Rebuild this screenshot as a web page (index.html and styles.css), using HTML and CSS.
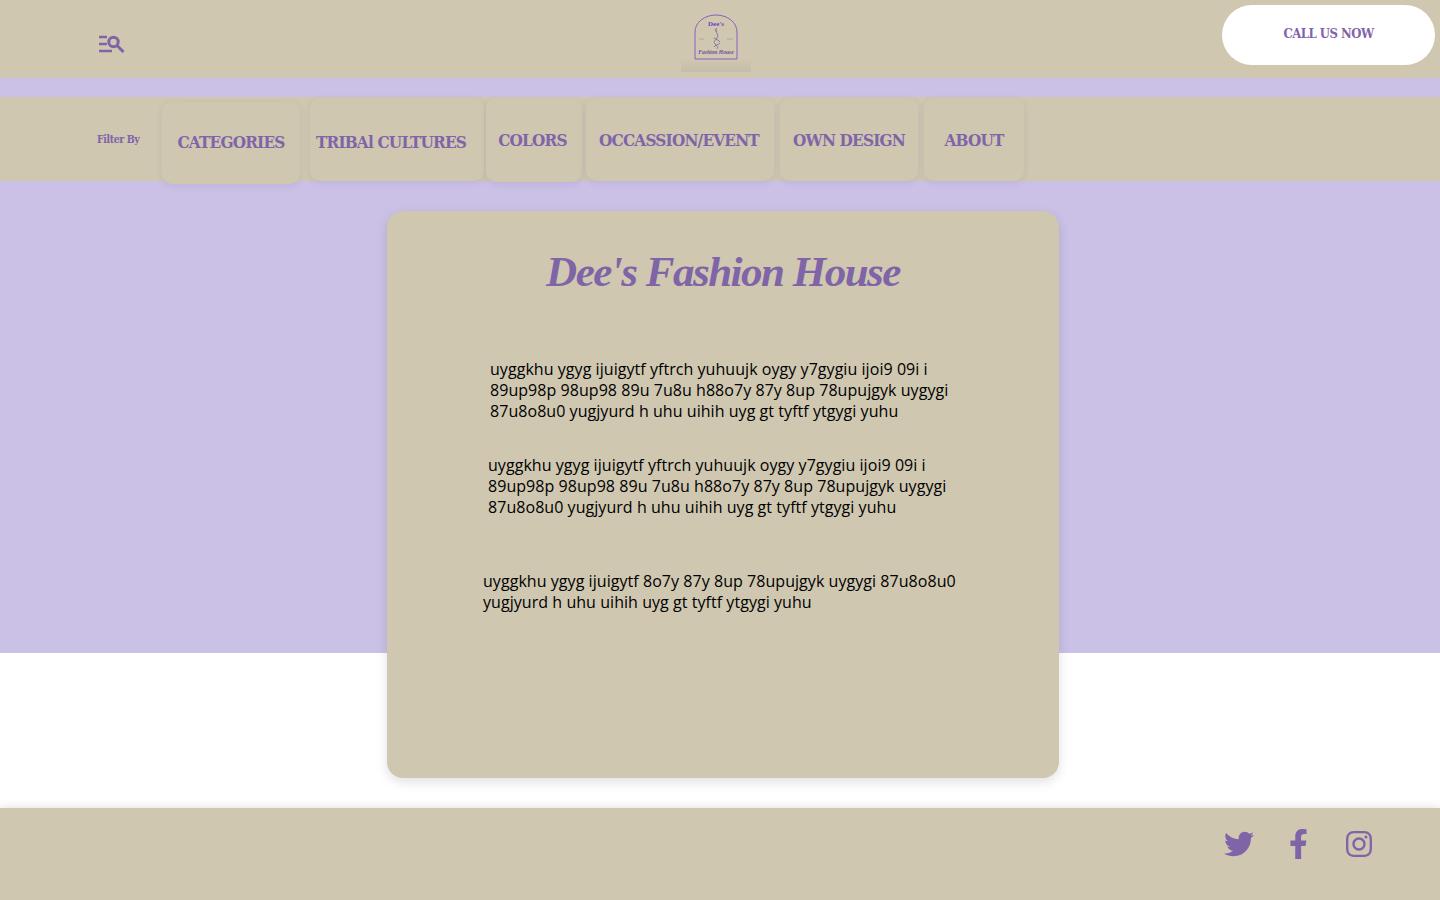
FILE: index.html
```html
<!DOCTYPE html>
<html lang="en">
<head>
    <meta charset="UTF-8">
    <meta name="viewport" content="width=device-width, initial-scale=1.0">
    <title>Dee's Fashion House</title>
    <link rel="stylesheet" href="styles.css">
</head>
<body>

    <header class="top-bar">
        <a class="menu-icon" href="#" aria-label="Search menu">
            <svg width="26" height="18" viewBox="0 0 26 18" fill="none" stroke="#8064a8" stroke-width="2.6">
                <path d="M0 2h8M0 9h8M0 16h13"/>
                <circle cx="14.5" cy="7" r="4.7" stroke-width="3"/>
                <path d="M18 10.5l6.5 6.5" stroke-width="3"/>
            </svg>
        </a>
        <div class="logo">
            <svg width="70" height="60" viewBox="0 0 70 60">
                <path d="M14 47V20C14 10 24 3 35 3s21 7 21 17v27z" fill="none" stroke="#8a5fc4" stroke-width="1"/>
                <text x="35" y="14" text-anchor="middle" class="logo-top">Dee's</text>
                <path d="M36 16c-4 3 3 6 0 10s-4 4-1 7 1 3 1 4M34 17l2 3M33 26c3 2 5 2 6 4M39 31c-2 2-5 2-6 4" fill="none" stroke="#8a75a8" stroke-width="1"/>
                <path d="M18 27h5M46 27h6" stroke="#a99bb0" stroke-width="0.8"/>
                <text x="35" y="42" text-anchor="middle" class="logo-bottom">Fashion House</text>
            </svg>
        </div>
        <a class="call-btn" href="#">CALL US NOW</a>
    </header>

    <section class="hero">
        <nav class="filter-bar">
            <span class="filter-label">Filter By</span>
            <a class="filter-item item-categories" href="#">CATEGORIES</a>
            <a class="filter-item item-tribal" href="#">TRIBAl CULTURES</a>
            <a class="filter-item item-colors" href="#">COLORS</a>
            <a class="filter-item item-occasion" href="#">OCCASSION/EVENT</a>
            <a class="filter-item item-design" href="#">OWN DESIGN</a>
            <a class="filter-item item-about" href="#">ABOUT</a>
        </nav>

        <main class="card">
            <h1>Dee's Fashion House</h1>
            <p class="para-one">uyggkhu ygyg ijuigytf yftrch yuhuujk oygy y7gygiu ijoi9 09i i<br>89up98p 98up98 89u 7u8u h88o7y 87y 8up 78upujgyk uygygi<br>87u8o8u0 yugjyurd h uhu uihih uyg gt tyftf ytgygi yuhu</p>
            <p class="para-two">uyggkhu ygyg ijuigytf yftrch yuhuujk oygy y7gygiu ijoi9 09i i<br>89up98p 98up98 89u 7u8u h88o7y 87y 8up 78upujgyk uygygi<br>87u8o8u0 yugjyurd h uhu uihih uyg gt tyftf ytgygi yuhu</p>
            <p class="para-three">uyggkhu ygyg ijuigytf 8o7y 87y 8up 78upujgyk uygygi 87u8o8u0<br>yugjyurd h uhu uihih uyg gt tyftf ytgygi yuhu</p>
        </main>
    </section>

    <footer class="footer">
        <a class="social-link" href="#" aria-label="Twitter">
            <svg width="30" height="30" viewBox="0 0 512 512"><path d="M459.37 151.716c.325 4.548.325 9.097.325 13.645 0 138.72-105.583 298.558-298.558 298.558-59.452 0-114.68-17.219-161.137-47.106 8.447.974 16.568 1.299 25.34 1.299 49.055 0 94.213-16.568 130.274-44.832-46.132-.975-84.792-31.188-98.112-72.772 6.498.974 12.995 1.624 19.818 1.624 9.421 0 18.843-1.3 27.614-3.573-48.081-9.747-84.143-51.98-84.143-102.985v-1.299c13.969 7.797 30.214 12.67 47.431 13.319-28.264-18.843-46.781-51.005-46.781-87.391 0-19.492 5.197-37.36 14.294-52.954 51.655 63.675 129.3 105.258 216.365 109.807-1.624-7.797-2.599-15.918-2.599-24.04 0-57.828 46.782-104.934 104.934-104.934 30.213 0 57.502 12.67 76.67 33.137 23.715-4.548 46.456-13.32 66.599-25.34-7.798 24.366-24.366 44.833-46.132 57.827 21.117-2.273 41.584-8.122 60.426-16.243-14.292 20.791-32.161 39.308-52.628 54.253z"/></svg>
        </a>
        <a class="social-link" href="#" aria-label="Facebook">
            <svg width="19" height="30" viewBox="0 0 320 512"><path d="M279.14 288l14.22-92.66h-88.91v-60.13c0-25.35 12.42-50.06 52.24-50.06h40.42V6.26S260.43 0 225.36 0c-73.22 0-121.08 44.38-121.08 124.72v70.62H22.89V288h81.39v224h100.17V288z"/></svg>
        </a>
        <a class="social-link" href="#" aria-label="Instagram">
            <svg width="26" height="30" viewBox="0 0 448 512"><path d="M224.1 141c-63.6 0-114.9 51.3-114.9 114.9s51.3 114.9 114.9 114.9S339 319.5 339 255.9 287.7 141 224.1 141zm0 189.6c-41.1 0-74.7-33.5-74.7-74.7s33.5-74.7 74.7-74.7 74.7 33.5 74.7 74.7-33.6 74.7-74.7 74.7zm146.4-194.3c0 14.9-12 26.8-26.8 26.8-14.9 0-26.8-12-26.8-26.8s12-26.8 26.8-26.8 26.8 12 26.8 26.8zm76.1 27.2c-1.7-35.9-9.9-67.7-36.2-93.9-26.2-26.2-58-34.4-93.9-36.2-37-2.1-147.9-2.1-184.9 0-35.8 1.7-67.6 9.9-93.9 36.1s-34.4 58-36.2 93.9c-2.1 37-2.1 147.9 0 184.9 1.7 35.9 9.9 67.7 36.2 93.9s58 34.4 93.9 36.2c37 2.1 147.9 2.1 184.9 0 35.9-1.7 67.7-9.9 93.9-36.2 26.2-26.2 34.4-58 36.2-93.9 2.1-37 2.1-147.8 0-184.8zM398.8 388c-7.8 19.6-22.9 34.7-42.6 42.6-29.5 11.7-99.5 9-132.1 9s-102.7 2.6-132.1-9c-19.6-7.8-34.7-22.9-42.6-42.6-11.7-29.5-9-99.5-9-132.1s-2.6-102.7 9-132.1c7.8-19.6 22.9-34.7 42.6-42.6 29.5-11.7 99.5-9 132.1-9s102.7-2.6 132.1 9c19.6 7.8 34.7 22.9 42.6 42.6 11.7 29.5 9 99.5 9 132.1s2.7 102.7-9 132.1z"/></svg>
        </a>
    </footer>

</body>
</html>
```

FILE: styles.css
```css
body {
    margin: 0;
    background-color: white;
    font-family: "Open Sans", sans-serif;
    height: 900px;
    overflow: hidden;
}
a {
    text-decoration: none;
    color: #8064a8;
}
.top-bar {
    display: flex;
    height: 78px;
    background-color: #cfc7b0;
}
.menu-icon {
    margin: 35px 0 0 99px;
    height: 18px;
}
.logo {
    width: 70px;
    height: 60px;
    margin: 12px 0 0 556px;
    background: linear-gradient(#cfc7b0 78%, #c4bda8);
}
.logo-top {
    font: bold 7px "Liberation Serif", serif;
    fill: #6f3fc0;
}
.logo-bottom {
    font: italic bold 5.6px "Liberation Serif", serif;
    fill: #6f4fa0;
}
.call-btn {
    width: 213px;
    height: 60px;
    margin: 5px 0 0 471px;
    background-color: white;
    border-radius: 30px;
    text-align: center;
    font: bold 13px/57px "DejaVu Serif Condensed", "DejaVu Serif", serif;
    letter-spacing: -0.5px;
}
.hero {
    height: 556px;
    padding-top: 19px;
    background-color: #cbc0e6;
}
.filter-bar {
    display: flex;
    align-items: flex-start;
    height: 84px;
    background-color: #cfc7b0;
    font: bold 17px "DejaVu Serif Condensed", "DejaVu Serif", serif;
    letter-spacing: -0.8px;
}
.filter-label {
    width: 65px;
    margin: 36px 0 0 97px;
    font-size: 10.5px;
    letter-spacing: -0.4px;
    color: #8064a8;
}
.filter-item {
    height: 83px;
    box-sizing: border-box;
    margin-top: 1px;
    padding-top: 32px;
    text-align: center;
    border-radius: 10px;
    background-color: #cfc7b0;
    box-shadow: 0 2px 6px rgba(100, 80, 140, 0.12);
}
.item-categories {
    width: 138px;
    height: 82px;
    margin-top: 5px;
    padding-top: 30px;
}
.item-tribal {
    width: 174px;
    margin-left: 10px;
    padding-top: 34px;
    padding-right: 12px;
    white-space: nowrap;
}
.item-colors {
    width: 96px;
    height: 84px;
    margin-left: 2px;
    padding-right: 3px;
    box-shadow: 0 3px 6px rgba(100, 80, 140, 0.12);
}
.item-occasion {
    width: 188px;
    margin-left: 4px;
    padding-right: 2px;
}
.item-design {
    width: 138px;
    margin-left: 6px;
}
.item-about {
    width: 100px;
    margin-left: 6px;
}
.card {
    width: 672px;
    height: 567px;
    box-sizing: border-box;
    margin: 30px 0 0 387px;
    padding-top: 34px;
    background-color: #cfc7b0;
    border-radius: 16px;
    box-shadow: 0 4px 12px rgba(0, 0, 0, 0.12);
    font-size: 16px;
    line-height: 21px;
    letter-spacing: 0.05px;
    color: black;
}
.card h1 {
    margin: 0 0 60px;
    text-align: center;
    font: italic bold 43px/54px "Liberation Serif", serif;
    letter-spacing: -1.5px;
    color: #8064a8;
}
.card p {
    margin: 0;
    white-space: nowrap;
}
.para-one {
    padding-left: 103px;
}
.card .para-two {
    margin-top: 33px;
    padding-left: 101px;
}
.card .para-three {
    margin-top: 53px;
    padding-left: 96px;
}
.footer {
    display: flex;
    justify-content: flex-end;
    gap: 35px;
    height: 92px;
    margin-top: 155px;
    box-sizing: border-box;
    padding: 21px 68px 0 0;
    background-color: #cfc7b0;
    box-shadow: 0 -1px 8px rgba(0, 0, 0, 0.12);
}
.social-link:last-child {
    margin-left: 3px;
}
.social-link svg {
    display: block;
    fill: #8064a8;
}
```
